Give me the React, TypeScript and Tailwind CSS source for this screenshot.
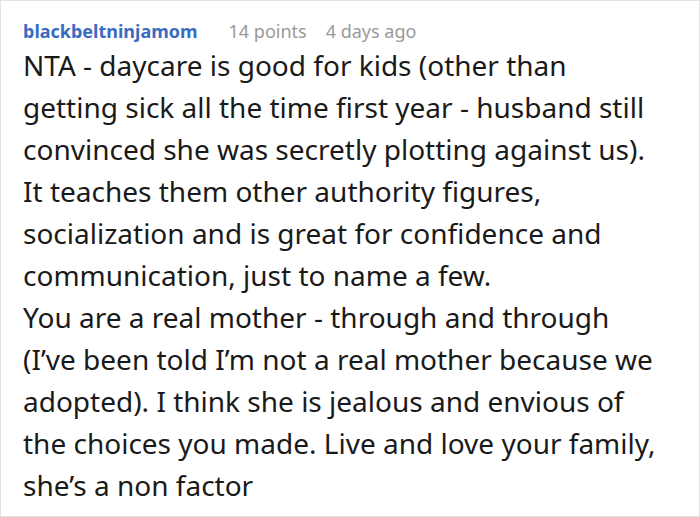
import React from 'react';

const lines = [
  'NTA - daycare is good for kids (other than getting sick all the time first year - husband still convinced she was secretly plotting against us). It teaches them other authority figures, socialization and is great for confidence and communication, just to name a few.',
  'You are a real mother - through and through (I\u2019ve been told I\u2019m not a real mother because we adopted). I think she is jealous and envious of the choices you made. Live and love your family, she\u2019s a non factor',
];

export default function App() {
  return (
    <div className="w-[700px] h-[517px] bg-white border border-[#e2e2e2] overflow-hidden font-['Noto_Sans',sans-serif]">
      <div className="pl-[22px] pt-[15px]">
        <div className="flex items-baseline text-[18px] leading-[30px]">
          <span className="font-bold text-[#3a6bbf]">blackbeltninjamom</span>
          <span className="ml-[31px] text-[#999999]">14 points</span>
          <span className="ml-[19px] text-[#999999]">4 days ago</span>
        </div>
        <div className="w-[636px] text-[28px] leading-[42px] text-[#1a1a1a] -mt-[2px]">
          {lines.map((t, i) => (
            <p key={i}>{t}</p>
          ))}
        </div>
      </div>
    </div>
  );
}
